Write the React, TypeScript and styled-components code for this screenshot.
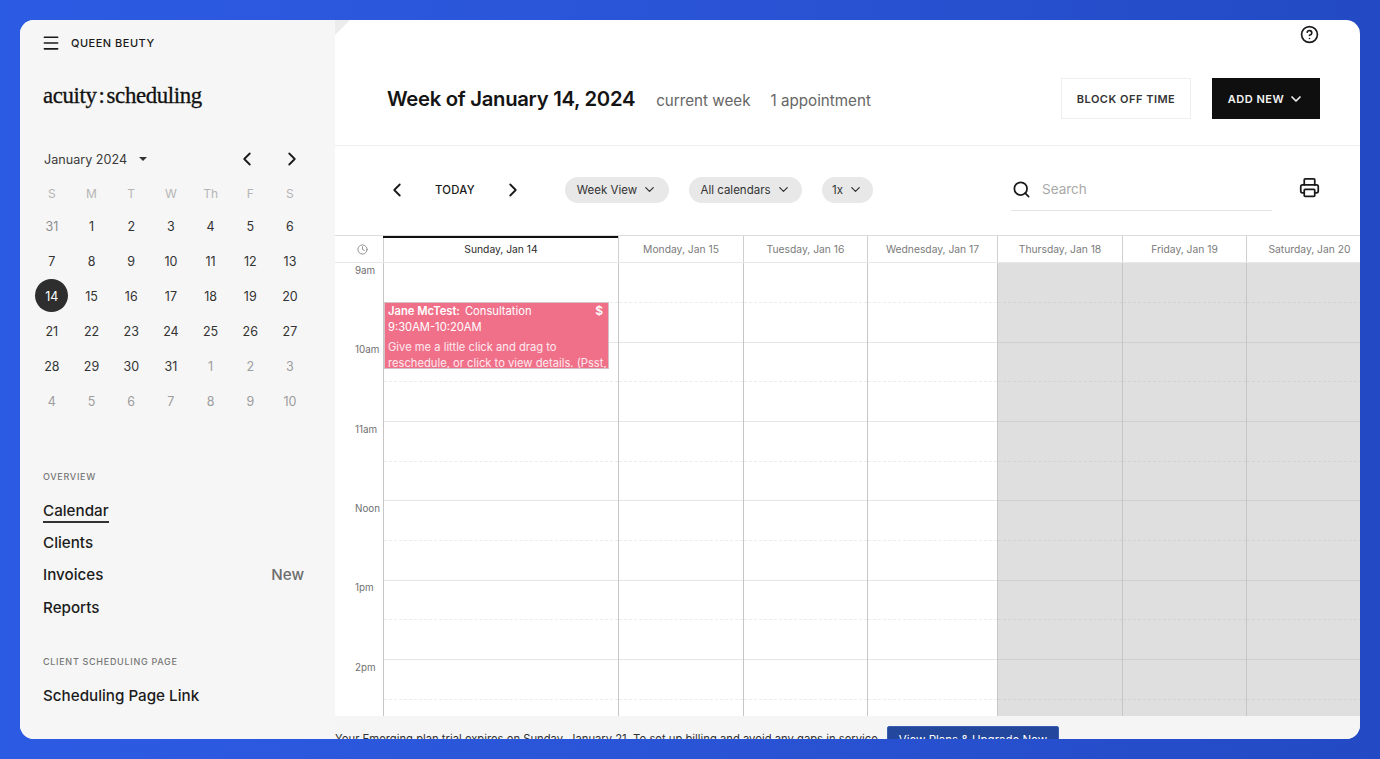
import React from 'react';
import styled, { createGlobalStyle } from 'styled-components';
import {
  ChevronDown,
  ChevronLeft,
  ChevronRight,
  CircleHelp,
  Clock,
  Menu,
  Printer,
  Search,
} from 'lucide-react';

const GlobalStyle = createGlobalStyle`
  html, body {
    margin: 0;
    padding: 0;
    height: 100%;
  }
  body {
    font-family: Inter, "Liberation Sans", sans-serif;
    background: linear-gradient(90deg, #2c5be3 0%, #2a54d6 50%, #234ac4 100%);
    overflow: hidden;
  }
`;

const Page = styled.div`
  height: 759px;
  padding: 20px;
  box-sizing: border-box;
`;

const Card = styled.div`
  display: flex;
  height: 719px;
  border-radius: 14px;
  overflow: hidden;
  background: #fff;
`;

const Sidebar = styled.aside`
  width: 315px;
  flex: none;
  box-sizing: border-box;
  background: #f6f6f6;
  padding: 0 12px 0 23px;
  color: #1a1a1a;
`;

const Account = styled.div`
  display: flex;
  align-items: center;
  gap: 10px;
  height: 46px;
  font-size: 11px;
  font-weight: 500;
  letter-spacing: 0.5px;
  svg { margin-left: -2px; }
`;

const Logo = styled.div`
  margin-top: 14px;
  height: 32px;
  line-height: 32px;
  font-family: "Liberation Serif", serif;
  font-size: 22.8px;
  letter-spacing: -0.35px;
  color: #111;
  -webkit-text-stroke: 0.3px #111;
`;

const LogoColon = styled.span`
  margin: 0 2px 0 2px;
`;

const MonthBar = styled.div`
  display: flex;
  align-items: center;
  height: 24px;
  margin-top: 35px;
  font-size: 12.6px;
  color: #3a3a3a;
  padding-left: 1px;
`;

const Caret = styled.span`
  width: 0;
  height: 0;
  margin-left: 12px;
  border-left: 4px solid transparent;
  border-right: 4px solid transparent;
  border-top: 4px solid #333;
`;

const MonthArrows = styled.div`
  display: flex;
  gap: 23px;
  margin-left: 89px;
  color: #1a1a1a;
`;

const MonthGrid = styled.div`
  display: grid;
  grid-template-columns: repeat(7, 39.7px);
  grid-template-rows: 31px;
  grid-auto-rows: 35px;
  margin: 7px 0 0 -11px;
`;

const WeekDay = styled.div`
  display: flex;
  align-items: center;
  justify-content: center;
  font-size: 12px;
  color: #b5b5b5;
`;

const DayCell = styled.div<{ $muted?: boolean; $faded?: boolean; $selected?: boolean }>`
  display: flex;
  align-items: center;
  justify-content: center;
  font-size: 12.5px;
  color: ${(p) => (p.$selected ? '#fff' : p.$muted ? '#8d8d8d' : '#333')};
  ${(p) => p.$faded && 'color: #9d9d9d;'}
  ${(p) => p.$selected && `
    &::before {
      content: '';
      position: absolute;
      top: 0;
      width: 33px;
      height: 33px;
      border-radius: 50%;
      background: #2e2e2e;
    }
  `}
  position: relative;
  span { position: relative; }
`;

const NavTitle = styled.div<{ $gap: number }>`
  margin-top: ${(p) => p.$gap}px;
  height: 14px;
  line-height: 14px;
  font-size: 9px;
  font-weight: 500;
  letter-spacing: 0.7px;
  color: #777;
`;

const NavList = styled.div`
  margin-top: 10px;
  padding-right: 19px;
`;

const NavItem = styled.div`
  display: flex;
  justify-content: space-between;
  align-items: center;
  height: 32.3px;
  font-size: 15.2px;
  font-weight: 450;
  color: #1c1c1c;
`;

const ActiveLabel = styled.span`
  line-height: 18px;
  margin-top: 5px;
  padding-bottom: 1px;
  border-bottom: 2px solid #333;
`;

const NewTag = styled.span`
  color: #6c6c6c;
`;

const Main = styled.main`
  position: relative;
  flex: 1;
  min-width: 0;
  display: flex;
  flex-direction: column;
`;

const CornerFold = styled.span`
  position: absolute;
  left: 0;
  top: 0;
  width: 15px;
  height: 15px;
  background: #ececec;
  clip-path: polygon(0 0, 100% 0, 0 100%);
`;

const HelpRow = styled.div`
  display: flex;
  justify-content: flex-end;
  height: 28px;
  padding: 5px 41px 0 0;
  box-sizing: border-box;
  color: #1a1a1a;
`;

const Header = styled.header`
  display: flex;
  align-items: center;
  height: 98px;
  box-sizing: border-box;
  padding: 4px 40px 0 52px;
  border-bottom: 1px solid #eeeeee;
`;

const Title = styled.h1`
  margin: 0 21px 0 0;
  font-size: 20.3px;
  font-weight: 600;
  letter-spacing: -0.3px;
  color: #141414;
`;

const Meta = styled.span`
  font-size: 15.2px;
  color: #666;
  margin-right: 20px;
  margin-top: 3px;
`;

const HeaderActions = styled.div`
  display: flex;
  gap: 21px;
  margin-left: auto;
`;

const ActionButton = styled.button<{ $dark?: boolean }>`
  display: flex;
  align-items: center;
  justify-content: center;
  gap: 4px;
  height: 41px;
  box-sizing: border-box;
  padding: 0;
  width: ${(p) => (p.$dark ? '108px' : '130px')};
  font-family: inherit;
  font-size: 11px;
  font-weight: 600;
  letter-spacing: 0.5px;
  background: ${(p) => (p.$dark ? '#0f0f0f' : '#fff')};
  color: ${(p) => (p.$dark ? '#f4f4f4' : '#333')};
  border: 1px solid ${(p) => (p.$dark ? '#0f0f0f' : '#eeeeee')};
`;

const Toolbar = styled.div`
  display: flex;
  align-items: center;
  height: 89px;
  box-sizing: border-box;
  padding: 0 40px 2px 51px;
  color: #1a1a1a;
`;

const TodayLabel = styled.span`
  width: 94px;
  text-align: center;
  font-size: 11.3px;
  font-weight: 500;
  letter-spacing: 0.3px;
`;

const Pills = styled.div`
  display: flex;
  gap: 20px;
  margin-left: 41px;
`;

const Pill = styled.div<{ $width: number }>`
  display: flex;
  align-items: center;
  justify-content: center;
  gap: 5px;
  width: ${(p) => p.$width}px;
  height: 26px;
  border-radius: 13px;
  background: #e8e8e8;
  font-size: 11.5px;
  color: #333;
`;

const SearchField = styled.div`
  display: flex;
  align-items: center;
  gap: 11px;
  width: 261px;
  height: 42px;
  box-sizing: border-box;
  margin: 0 27px 0 auto;
  padding-left: 1px;
  border-bottom: 1px solid #e4e4e4;
  font-size: 13.5px;
  color: #a9a9a9;
  svg { color: #1a1a1a; }
`;

const PrintButton = styled.div`
  display: flex;
  margin-bottom: 4px;
`;

const CalendarHead = styled.div`
  display: flex;
  height: 28px;
  box-sizing: border-box;
  overflow: hidden;
  border-top: 1px solid #dcdcdc;
  border-bottom: 1px solid #e8e8e8;
`;

const TimeHeadCell = styled.div`
  width: 48px;
  flex: none;
  display: flex;
  align-items: center;
  justify-content: center;
  color: #8a8a8a;
  padding-left: 6px;
  box-sizing: border-box;
`;

const DayHead = styled.div<{ $width: number; $today?: boolean }>`
  position: relative;
  width: ${(p) => p.$width}px;
  flex: none;
  display: flex;
  align-items: center;
  justify-content: center;
  box-sizing: border-box;
  font-size: 10.3px;
  border-left: 1px solid #cfcfcf;
  color: ${(p) => (p.$today ? '#2a2a2a' : '#7b7b7b')};
  ${(p) => p.$today && `
    &::before {
      content: '';
      position: absolute;
      left: -1px;
      right: 0;
      top: 0;
      height: 2px;
      background: #111;
    }
  `}
`;

const CalendarBody = styled.div`
  display: flex;
  height: 453px;
  overflow: hidden;
`;

const TimeColumn = styled.div`
  width: 48px;
  flex: none;
`;

const HourLabel = styled.div`
  height: 79.34px;
  padding-left: 20px;
  box-sizing: border-box;
  font-size: 9.8px;
  line-height: 15px;
  color: #6f6f6f;
`;

const DayColumn = styled.div<{ $width: number; $closed?: boolean }>`
  position: relative;
  width: ${(p) => p.$width}px;
  flex: none;
  box-sizing: border-box;
  padding-top: 0.5px;
  border-left: 1px solid #c6c6c6;
  background: ${(p) => (p.$closed ? '#dfdfdf' : '#fff')};
`;

const Slot = styled.div<{ $half: boolean; $closed?: boolean }>`
  height: 39.67px;
  box-sizing: border-box;
  border-bottom: 1px ${(p) => (p.$half ? 'dashed' : 'solid')}
    ${(p) => {
      if (p.$closed) {
        return p.$half ? '#d3d3d3' : '#cfcfcf';
      }
      return p.$half ? '#ececec' : '#e6e6e6';
    }};
`;

const EventCard = styled.div`
  position: absolute;
  left: 0;
  top: 39px;
  width: 225px;
  height: 67px;
  box-sizing: border-box;
  padding: 0 5px 0 3px;
  overflow: hidden;
  background: #f0708a;
  border: 1px solid #d5c3c7;
  color: #fff;
  font-size: 11.2px;
  line-height: 16px;
`;

const EventTitle = styled.div`
  display: flex;
  justify-content: space-between;
`;

const EventClient = styled.b`
  font-weight: 600;
  margin-right: 5px;
`;

const EventPrice = styled.b`
  font-weight: 600;
  font-size: 12px;
`;

const EventNote = styled.div`
  margin-top: 4px;
  color: #ffe9ee;
  white-space: nowrap;
`;

const TrialBar = styled.div`
  flex: 1;
  display: flex;
  align-items: flex-start;
  background: #f5f5f5;
  font-size: 11.25px;
  color: #333;
  white-space: nowrap;
  overflow: hidden;
`;

const TrialText = styled.span`
  margin-top: 16px;
  width: 552px;
  flex: none;
`;

const UpgradeButton = styled.div`
  margin-top: 10px;
  width: 172px;
  height: 30px;
  flex: none;
  padding-top: 6px;
  box-sizing: border-box;
  text-align: center;
  font-size: 11.5px;
  color: #fff;
  background: #22479c;
  border: 1px solid #3a5cae;
  border-radius: 2px;
`;

const weekDays = ['S', 'M', 'T', 'W', 'Th', 'F', 'S'];

const monthDays: { day: number; muted?: boolean; faded?: boolean }[] = [
  { day: 31, muted: true },
  ...[1, 2, 3, 4, 5, 6].map((day) => ({ day })),
  ...Array.from({ length: 25 }, (_, i) => ({ day: i + 7 })),
  ...[1, 2, 3, 4, 5, 6, 7, 8, 9, 10].map((day) => ({ day, faded: true })),
];

const days = [
  { label: 'Sunday, Jan 14', width: 235, today: true },
  { label: 'Monday, Jan 15', width: 125 },
  { label: 'Tuesday, Jan 16', width: 124 },
  { label: 'Wednesday, Jan 17', width: 130 },
  { label: 'Thursday, Jan 18', width: 125, closed: true },
  { label: 'Friday, Jan 19', width: 124, closed: true },
  { label: 'Saturday, Jan 20', width: 126, closed: true },
];

const hours = ['9am', '10am', '11am', 'Noon', '1pm', '2pm'];
const slots = Array.from({ length: 12 }, (_, i) => i);

export default function App() {
  return (
    <Page>
      <GlobalStyle />
      <Card>
        <Sidebar>
          <Account>
            <Menu size={20} strokeWidth={1.9} />
            QUEEN BEUTY
          </Account>
          <Logo>acuity<LogoColon>:</LogoColon>scheduling</Logo>
          <MonthBar>
            January 2024
            <Caret />
            <MonthArrows>
              <ChevronLeft size={22} strokeWidth={2} />
              <ChevronRight size={22} strokeWidth={2} />
            </MonthArrows>
          </MonthBar>
          <MonthGrid>
            {weekDays.map((d, i) => (
              <WeekDay key={i}>{d}</WeekDay>
            ))}
            {monthDays.map((d, i) => (
              <DayCell key={i} $muted={d.muted} $faded={d.faded} $selected={i === 14}>
                <span>{d.day}</span>
              </DayCell>
            ))}
          </MonthGrid>
          <NavTitle $gap={51}>OVERVIEW</NavTitle>
          <NavList>
            <NavItem><ActiveLabel>Calendar</ActiveLabel></NavItem>
            <NavItem>Clients</NavItem>
            <NavItem>Invoices<NewTag>New</NewTag></NavItem>
            <NavItem>Reports</NavItem>
          </NavList>
          <NavTitle $gap={32}>CLIENT SCHEDULING PAGE</NavTitle>
          <NavList>
            <NavItem>Scheduling Page Link</NavItem>
          </NavList>
        </Sidebar>
        <Main>
          <CornerFold />
          <HelpRow>
            <CircleHelp size={19} strokeWidth={2.1} />
          </HelpRow>
          <Header>
            <Title>Week of January 14, 2024</Title>
            <Meta>current week</Meta>
            <Meta>1 appointment</Meta>
            <HeaderActions>
              <ActionButton>BLOCK OFF TIME</ActionButton>
              <ActionButton $dark>
                ADD NEW
                <ChevronDown size={16} strokeWidth={2.5} />
              </ActionButton>
            </HeaderActions>
          </Header>
          <Toolbar>
            <ChevronLeft size={22} strokeWidth={2} />
            <TodayLabel>TODAY</TodayLabel>
            <ChevronRight size={22} strokeWidth={2} />
            <Pills>
              <Pill $width={104}>Week View<ChevronDown size={15} /></Pill>
              <Pill $width={113}>All calendars<ChevronDown size={15} /></Pill>
              <Pill $width={51}>1x<ChevronDown size={15} /></Pill>
            </Pills>
            <SearchField>
              <Search size={19} strokeWidth={2.2} />
              Search
            </SearchField>
            <PrintButton>
              <Printer size={21} strokeWidth={2} />
            </PrintButton>
          </Toolbar>
          <CalendarHead>
            <TimeHeadCell><Clock size={11} /></TimeHeadCell>
            {days.map((d) => (
              <DayHead key={d.label} $width={d.width} $today={d.today}>{d.label}</DayHead>
            ))}
          </CalendarHead>
          <CalendarBody>
            <TimeColumn>
              {hours.map((h) => (
                <HourLabel key={h}>{h}</HourLabel>
              ))}
            </TimeColumn>
            {days.map((d) => (
              <DayColumn key={d.label} $width={d.width} $closed={d.closed}>
                {slots.map((s) => (
                  <Slot key={s} $half={s % 2 === 0} $closed={d.closed} />
                ))}
                {d.today && (
                  <EventCard>
                    <EventTitle>
                      <span><EventClient>Jane McTest:</EventClient>Consultation</span>
                      <EventPrice>$</EventPrice>
                    </EventTitle>
                    <div>9:30AM-10:20AM</div>
                    <EventNote>
                      Give me a little click and drag to<br />
                      reschedule, or click to view details. (Psst,
                    </EventNote>
                  </EventCard>
                )}
              </DayColumn>
            ))}
          </CalendarBody>
          <TrialBar>
            <TrialText>Your Emerging plan trial expires on Sunday, January 21.  To set up billing and avoid any gaps in service</TrialText>
            <UpgradeButton>View Plans &amp; Upgrade Now</UpgradeButton>
          </TrialBar>
        </Main>
      </Card>
    </Page>
  );
}
